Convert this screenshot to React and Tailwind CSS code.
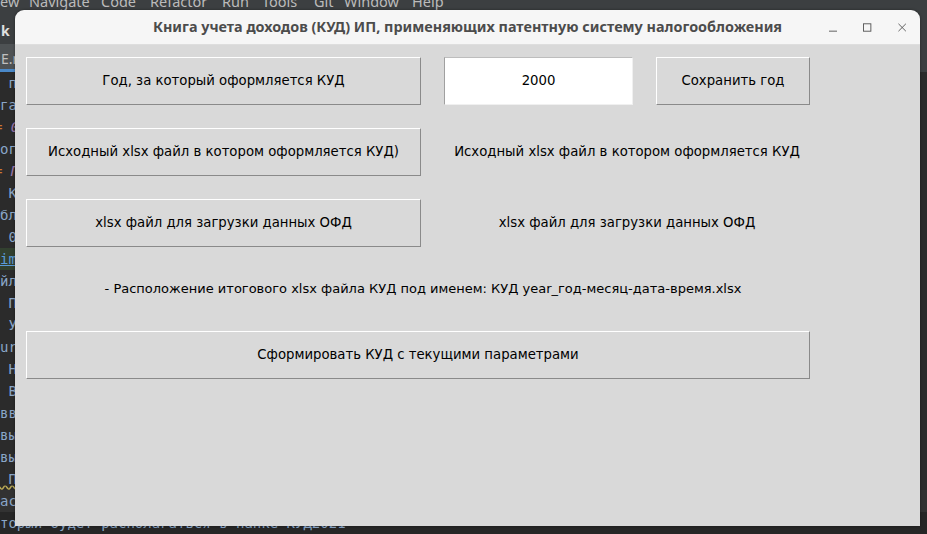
import React from 'react';

const menuItems = [
  { t: 'ew', w: 'w-[29px]' },
  { t: 'Navigate', w: 'w-[72px]' },
  { t: 'Code', w: 'w-[49px]' },
  { t: 'Refactor', w: 'w-[72px]' },
  { t: 'Run', w: 'w-[40px]' },
  { t: 'Tools', w: 'w-[52px]' },
  { t: 'Git', w: 'w-[30px]' },
  { t: 'Window', w: 'w-[68px]' },
  { t: 'Help', w: 'w-[40px]' },
];

// what peeks out of the IDE behind the window (left edge)
const codeLines = [
  { t: ' п' },
  { t: 'га' },
  { t: '=', accent: ' 0' },
  { t: 'ог' },
  { t: '=', accent: ' П' },
  { t: ' К' },
  { t: 'бл' },
  { t: ' 0' },
  { t: 'im', link: true },
  { t: 'йл' },
  { t: ' П' },
  { t: ' У' },
  { t: 'ur' },
  { t: ' Н' },
  { t: ' В' },
  { t: 'вв' },
  { t: 'вы' },
  { t: 'вы' },
  { t: ' П', wavy: true },
  { t: 'ас', current: true },
  { t: 'торый будет располагаться в папке КУД2021', last: true },
];

function TkButton({ className = '', children }) {
  return (
    <div
      className={`flex items-center justify-center h-[48px] bg-[#d9d9d9] border border-t-white border-l-white border-r-[#8a8a8a] border-b-[#8a8a8a] text-[13.25px] text-black ${className}`}
    >
      {children}
    </div>
  );
}

function TkLabel({ className = '', children }) {
  return (
    <div className={`flex items-center justify-center text-black ${className}`}>
      {children}
    </div>
  );
}

export default function App() {
  return (
    <div className="relative w-[927px] h-[534px] overflow-hidden bg-[#2b2b2b] font-['DejaVu_Sans',sans-serif]">
      {/* IDE background */}
      <div className="flex flex-col h-full">
        <div className="h-[10px] overflow-hidden bg-[#3c3f41]">
          <div className="-mt-[9px] flex text-[14.5px] leading-[20px] text-[#bbbbbb] font-['Noto_Sans',sans-serif]">
            {menuItems.map((m) => (
              <span key={m.t} className={`shrink-0 ${m.w}`}>{m.t}</span>
            ))}
          </div>
        </div>
        <div className="h-[35px] bg-[#3c3f41] flex items-end pb-[3px] pl-[1px] text-[14px] font-bold text-[#e0e0e0] font-['Noto_Sans',sans-serif]">
          k <span className="ml-[6px] font-normal text-[#777]">›</span>
        </div>
        <div className="h-[28px] bg-[#3c3f41] flex">
          <div className="h-full w-[60px] bg-[#4e5254] border-b-[3px] border-[#4a88c7] pt-[4px] pl-[1px] text-[14px] text-[#c0c0c0] font-['Noto_Sans',sans-serif]">
            E.md
          </div>
        </div>
        <div className="flex-1 flex flex-col font-['DejaVu_Sans_Mono',monospace] text-[14px] text-[#8aa6c8]">
          {codeLines.map((l, i) => (
            <div
              key={i}
              className={`h-[22px] whitespace-pre ${l.current ? 'bg-[#323232]' : ''} ${l.last ? 'leading-[22px] bg-[#262626]' : 'leading-[22px]'}`}
            >
              {l.link ? (
                <span className="inline-block w-[20px] bg-[#32402f] underline text-[#5a9bd8]">{l.t}</span>
              ) : l.accent ? (
                <>
                  <span className="inline-block -ml-[6px] text-[#cc7832]">{l.t}</span>
                  <span className="italic text-[#9876aa]">{l.accent}</span>
                </>
              ) : l.wavy ? (
                <span className="underline decoration-wavy decoration-[#b9a955]">{l.t}</span>
              ) : (
                l.t
              )}
              {i === 10 && <span className="ml-[862px]">А</span>}
              {i === 19 && <span className="ml-[890px]">л</span>}
            </div>
          ))}
        </div>
      </div>

      {/* Tk window */}
      <div className="absolute left-[15px] top-[10px] w-[905px] h-[516px] flex flex-col rounded-t-[9px] overflow-hidden shadow-[0_0_3px_rgba(0,0,0,0.4)]">
        <div className="h-[35px] flex items-center bg-[#f6f6f6] border-b border-[#dedede]">
          <div className="w-[91px]" />
          <div className="flex-1 text-center text-[14.4px] font-bold text-[#4c4c4c] font-['Noto_Sans',sans-serif]">
            Книга учета доходов (КУД) ИП, применяющих патентную систему налогообложения
          </div>
          <div className="w-[91px] pr-[14px] flex items-center justify-end gap-[26px]">
            <svg width="9" height="10" viewBox="0 0 9 10">
              <line x1="0" y1="9.5" x2="9" y2="9.5" stroke="#555" strokeWidth="1" />
            </svg>
            <svg width="9" height="9" viewBox="0 0 9 9">
              <rect x="0.5" y="0.5" width="8" height="8" fill="none" stroke="#555" strokeWidth="1" />
            </svg>
            <svg width="9" height="9" viewBox="0 0 9 9">
              <path d="M0.5 0.5 L8.5 8.5 M8.5 0.5 L0.5 8.5" stroke="#555" strokeWidth="1" />
            </svg>
          </div>
        </div>

        <div className="flex-1 bg-[#d9d9d9] pl-[11px] pt-[12px] flex flex-col gap-[23px]">
          <div className="flex gap-[23px]">
            <TkButton className="w-[395px]">Год, за который оформляется КУД</TkButton>
            <div className="w-[189px] h-[48px] flex items-center justify-center bg-white border border-t-[#bdbdbd] border-l-[#a0a0a0] border-r-[#f0f0f0] border-b-[#f0f0f0] text-[13.25px] text-black">
              2000
            </div>
            <TkButton className="w-[154px]">Сохранить год</TkButton>
          </div>
          <div className="flex gap-[23px]">
            <TkButton className="w-[395px]">Исходный xlsx файл в котором оформляется КУД)</TkButton>
            <TkLabel className="w-[366px] h-[48px] text-[13.25px]">Исходный xlsx файл в котором оформляется КУД</TkLabel>
          </div>
          <div className="flex gap-[23px]">
            <TkButton className="w-[395px]">xlsx файл для загрузки данных ОФД</TkButton>
            <TkLabel className="w-[366px] h-[48px] text-[13.25px]">xlsx файл для загрузки данных ОФД</TkLabel>
          </div>
          <TkLabel className="w-[784px] h-[38px] pl-[10px] text-[13px]">
            - Расположение итогового xlsx файла КУД под именем: КУД year_год-месяц-дата-время.xlsx
          </TkLabel>
          <TkButton className="w-[784px]">Сформировать КУД с текущими параметрами</TkButton>
        </div>
      </div>
    </div>
  );
}
